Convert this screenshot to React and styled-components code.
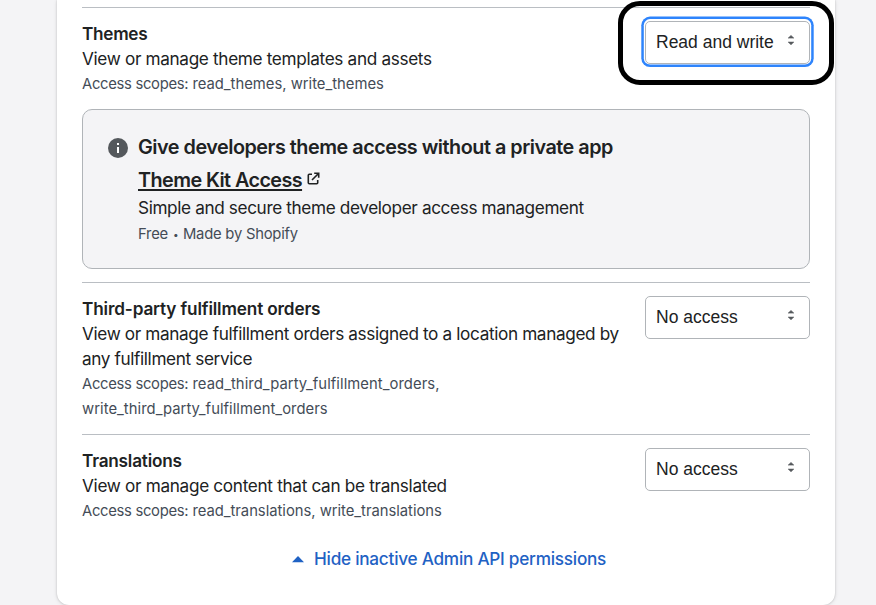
import React from "react";
import styled, { createGlobalStyle } from "styled-components";

const GlobalStyle = createGlobalStyle`
  * { box-sizing: border-box; }
  html, body { margin: 0; height: 100%; overflow: hidden; background: #f4f4f6; }
  body { font-family: Inter, "Liberation Sans", sans-serif; color: #202223; }
`;

const Page = styled.main`
  display: flex;
  height: 605px;
  padding-left: 57px;
  overflow: hidden;
`;

const Panel = styled.section`
  width: 778px;
  height: 605px;
  padding: 7px 25px 0;
  background: #fff;
  border-radius: 0 0 12px 12px;
  box-shadow: 0 0 2px rgba(23, 24, 24, 0.22), 0 1px 4px rgba(23, 24, 24, 0.1);
`;

const Permission = styled.div`
  display: flex;
  justify-content: space-between;
  align-items: flex-start;
  border-top: 1px solid #babec3;
  padding: 13px 0 12px;
`;

const Details = styled.div`
  width: 545px;
  padding-bottom: 1px;
`;

const Line = styled.div`
  font-size: 17.2px;
  line-height: 25px;
  white-space: nowrap;
  letter-spacing: ${(p) => p.$track || 0}px;
`;

const Title = styled(Line)`
  font-weight: 600;
`;

const Subdued = styled(Line)`
  height: 25px;
  font-size: 14.8px;
  line-height: 27px;
  color: #444c57;
`;

const Label = styled.span`
  letter-spacing: -0.3px;
`;

const SelectBox = styled.button`
  position: relative;
  display: flex;
  align-items: center;
  justify-content: space-between;
  width: 165px;
  height: 43px;
  padding: 0 14px 0 10px;
  border: 1px solid #b0b4b8;
  border-radius: 5px;
  background: #fff;
  color: #202223;
  font: 17.5px/25px "Liberation Sans", Arial, sans-serif;
  box-shadow: ${(p) => (p.$focused ? "0 -0.7px 0 1.2px #fff, 0 -0.7px 0 3.7px #2e84fc" : "none")};
`;

const Arrows = styled.svg`
  width: 9px;
  height: 12px;
  margin-top: -5px;
`;

const Highlight = styled.span`
  position: absolute;
  top: -21px;
  left: -28px;
  width: 215.5px;
  height: 83.5px;
  border: 5px solid #000;
  border-radius: 22px;
  pointer-events: none;
`;

const Banner = styled.aside`
  display: flex;
  height: 160px;
  margin-bottom: 13px;
  padding: 25px;
  gap: 10px;
  border: 1px solid #b0b4b8;
  border-radius: 10px;
  background: #f4f4f6;
`;

const InfoIcon = styled.svg`
  width: 20px;
  height: 20px;
  margin-top: 3px;
  flex: none;
`;

const Heading = styled.div`
  font-size: 19.8px;
  line-height: 25px;
  font-weight: 600;
  white-space: nowrap;
  letter-spacing: ${(p) => p.$track || 0}px;
`;

const AppLink = styled.a`
  display: flex;
  align-items: flex-start;
  gap: 4.5px;
  margin: 8px 0 2px;
  color: #202223;
  span {
    text-decoration: underline;
    text-decoration-thickness: 2px;
    text-underline-offset: 2px;
    text-decoration-skip-ink: none;
  }
`;

const ExternalIcon = styled.svg`
  width: 13px;
  height: 13px;
  margin-top: 3.5px;
`;

const Meta = styled(Subdued)`
  display: flex;
  gap: 5px;
  margin-top: 1px;
`;

const Dot = styled.span`
  width: 5px;
  font-size: 10px;
`;

const Toggle = styled.a`
  display: flex;
  align-items: center;
  margin: 10px 0 0 210px;
  gap: 10px;
  color: #1f62c4;
`;

const ToggleText = styled(Line)`
  font-weight: 500;
`;

function Select({ children, focused }) {
  return (
    <SelectBox $focused={focused}>
      {children}
      <Arrows viewBox="0 0 9 12" fill="#55595d" stroke="#55595d" strokeWidth="0.6" strokeLinejoin="round">
        <path d="M5 1.4 7.8 4.1H2.2ZM5 10.8 2.2 8.1h5.6Z" />
      </Arrows>
      {focused && <Highlight />}
    </SelectBox>
  );
}

export default function App() {
  return (
    <Page>
      <GlobalStyle />
      <Panel>
        <Permission>
          <Details>
            <Title $track={-0.3}>Themes</Title>
            <Line $track={-0.34}>View or manage theme templates and assets</Line>
            <Subdued>
              <Label>Access scopes:</Label> read_themes, write_themes
            </Subdued>
          </Details>
          <Select focused>Read and write</Select>
        </Permission>
        <Banner>
          <InfoIcon viewBox="0 0 20 20">
            <circle cx="10" cy="10" r="10" fill="#54585c" />
            <path d="M9 5h2v2H9zM9 9h2v6H9z" fill="#fff" />
          </InfoIcon>
          <div>
            <Heading $track={-0.48}>Give developers theme access without a private app</Heading>
            <AppLink>
              <Heading as="span" $track={-0.57}>Theme Kit Access</Heading>
              <ExternalIcon viewBox="0 0 13 13" fill="none" stroke="#202223" strokeWidth="1.6">
                <path d="M5 2.3H2.3Q1.3 2.3 1.3 3.3v7.4q0 1 1 1h7.4q1 0 1-1V8M7.2 1.3h4.5v4.5M11.5 1.5 5 8" />
              </ExternalIcon>
            </AppLink>
            <Line $track={-0.375}>Simple and secure theme developer access management</Line>
            <Meta $track={-0.23}>
              <span>Free</span>
              <Dot>•</Dot>
              <span>Made by Shopify</span>
            </Meta>
          </div>
        </Banner>
        <Permission>
          <Details>
            <Title $track={-0.15}>Third-party fulfillment orders</Title>
            <Line $track={-0.367}>View or manage fulfillment orders assigned to a location managed by</Line>
            <Line $track={-0.38}>any fulfillment service</Line>
            <Subdued $track={0.06}>
              <Label>Access scopes:</Label> read_third_party_fulfillment_orders,
            </Subdued>
            <Subdued $track={0.05}>write_third_party_fulfillment_orders</Subdued>
          </Details>
          <Select>No access</Select>
        </Permission>
        <Permission>
          <Details>
            <Title $track={-0.2}>Translations</Title>
            <Line $track={-0.32}>View or manage content that can be translated</Line>
            <Subdued $track={-0.02}>
              <Label>Access scopes:</Label> read_translations, write_translations
            </Subdued>
          </Details>
          <Select>No access</Select>
        </Permission>
        <Toggle>
          <svg width="12" height="8" viewBox="0 0 12 8" fill="#1f62c4"><path d="M0 7.3 6 1l6 6.3Z" /></svg>
          <ToggleText $track={-0.25}>Hide inactive Admin API permissions</ToggleText>
        </Toggle>
      </Panel>
    </Page>
  );
}
